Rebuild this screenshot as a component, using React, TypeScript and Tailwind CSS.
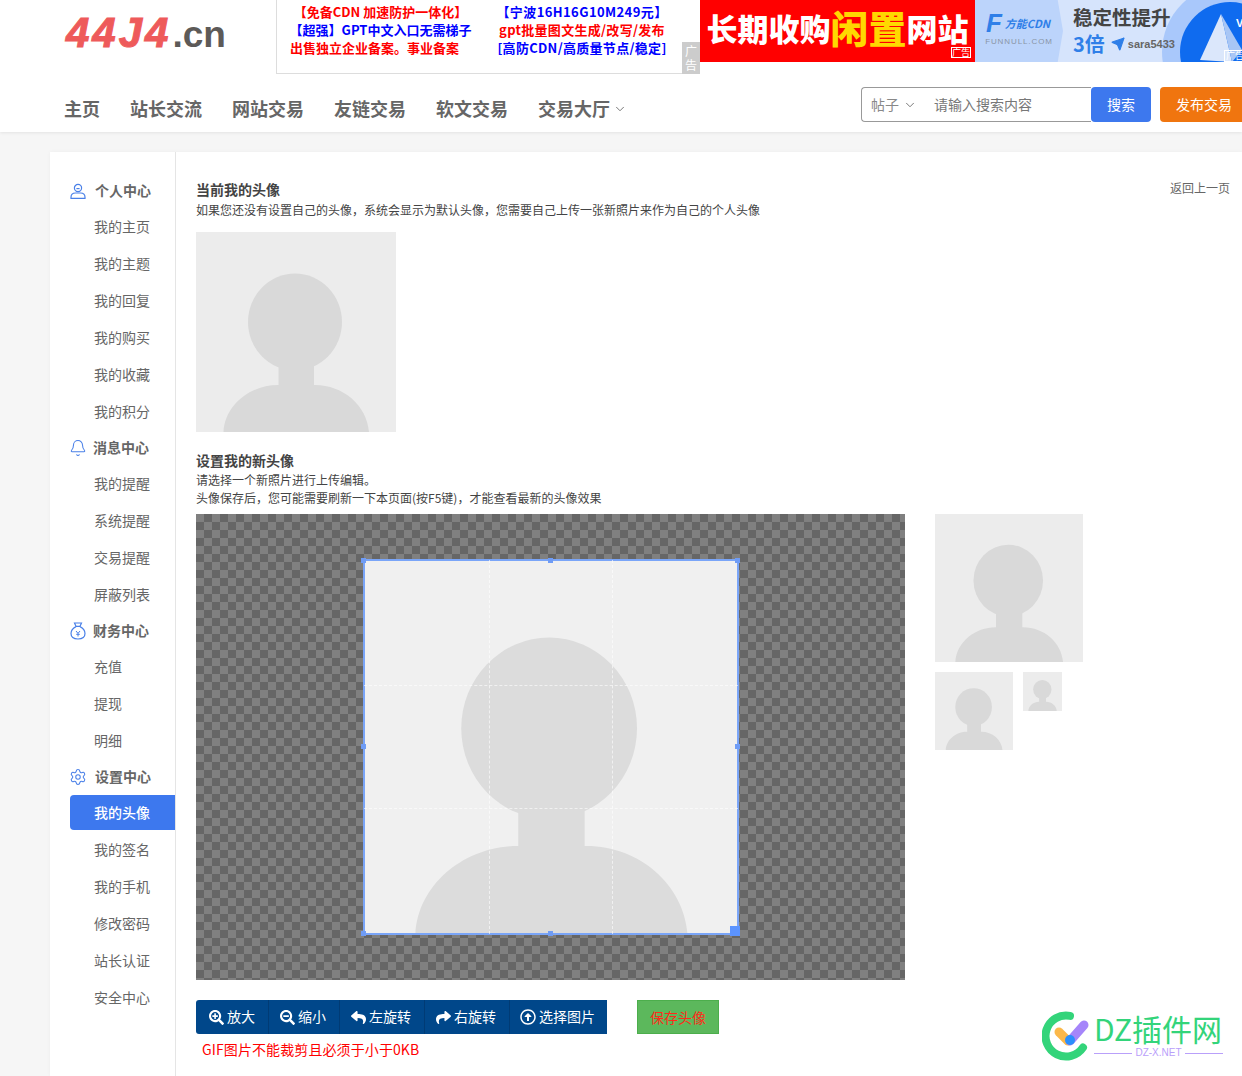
import { Bell, ChevronDown, Settings, Send } from "lucide-react";
import { FaSearchPlus, FaSearchMinus, FaReply, FaShare, FaRegArrowAltCircleUp } from "react-icons/fa";
import type { ReactNode } from "react";

const CN = "font-['Noto_Sans_CJK_SC','Noto_Sans',sans-serif]";

function UserIcon() {
  return (
    <svg width="16" height="16" viewBox="0 0 16 16" fill="none" stroke="#4a80e8" strokeWidth="1.2" className="shrink-0">
      <circle cx="8" cy="5" r="3.6" />
      <path d="M1 15.400v-1.200c0-2.600 2-4.200 4.400-4.200h5.200c2.400 0 4.400 1.600 4.400 4.200v1.200z" />
      <path d="M6.400 5.600h3.200" />
    </svg>
  );
}
function BagIcon() {
  return (
    <svg width="16" height="18" viewBox="0 0 16 18" fill="none" stroke="#4a80e8" strokeWidth="1.2" className="shrink-0">
      <path d="M4.500 1h7l-1.600 3.400H6.100z" />
      <path d="M6 4.600C3 6 1 8.600 1 11.600 1 15 3.500 17 8 17s7-2 7-5.400c0-3-2-5.600-5-7" />
      <path d="M6 9l2 2.400L10 9M8 11.400V14.500M6.200 12.300h3.600" strokeWidth="1" />
    </svg>
  );
}

function AvatarArt({ bg, fg, size, className = "" }: { bg: string; fg: string; size: number; className?: string }) {
  return (
    <svg width={size} height={size} viewBox="0 0 200 200" className={`block shrink-0 ${className}`}>
      <rect width="200" height="200" fill={bg} />
      <ellipse cx="99" cy="90" rx="47" ry="48.500" fill={fg} />
      <rect x="82.500" y="132" width="35.500" height="36" fill={fg} />
      <path d="M27.500 200C29 172 56 152 84 153h33c29 -1 54 20 56 47z" fill={fg} />
    </svg>
  );
}

const groups: { title: string; icon: ReactNode; textClass: string; items: string[] }[] = [
  { title: "个人中心", icon: <UserIcon />, textClass: "ml-[9px]", items: ["我的主页", "我的主题", "我的回复", "我的购买", "我的收藏", "我的积分"] },
  { title: "消息中心", icon: <Bell size={18} color="#4a80e8" strokeWidth={1.4} className="shrink-0" />, textClass: "ml-[7px]", items: ["我的提醒", "系统提醒", "交易提醒", "屏蔽列表"] },
  { title: "财务中心", icon: <BagIcon />, textClass: "ml-[7px]", items: ["充值", "提现", "明细"] },
  { title: "设置中心", icon: <Settings size={18} color="#4a80e8" strokeWidth={1.4} className="shrink-0" />, textClass: "ml-[9px]", items: ["我的头像", "我的签名", "我的手机", "修改密码", "站长认证", "安全中心"] },
];

const tools: { label: string; icon: ReactNode; w: string }[] = [
  { label: "放大", icon: <FaSearchPlus size={15} />, w: "w-[72px] pl-[12px]" },
  { label: "缩小", icon: <FaSearchMinus size={15} />, w: "w-[71px] pl-[10px]" },
  { label: "左旋转", icon: <FaReply size={15} />, w: "w-[85px] pl-[10px]" },
  { label: "右旋转", icon: <FaShare size={15} />, w: "w-[85px] pl-[10px]" },
  { label: "选择图片", icon: <FaRegArrowAltCircleUp size={16} />, w: "w-[98px] pl-[10px]" },
];

const nav = ["主页", "站长交流", "网站交易", "友链交易", "软文交易"];

const handles = [
  "left-[-3px] top-[-2px]",
  "left-[184px] top-[-2px]",
  "left-[371px] top-[-2px]",
  "left-[-3px] top-[184px]",
  "left-[371px] top-[184px]",
  "left-[-3px] top-[371px]",
  "left-[184px] top-[371px]",
];

export default function App() {
  return (
    <div className={`relative h-[1076px] w-[1242px] overflow-hidden bg-[#f6f6f6] ${CN}`}>
      {/* header */}
      <header className="h-[132px] bg-white shadow-[0_1px_3px_rgba(0,0,0,0.08)]">
        <div className="flex h-[74px]">
          <div className="flex w-[276px] items-baseline pl-[66px] pt-[7px]">
            <span className="font-['Liberation_Sans',sans-serif] text-[42px] font-bold italic leading-[52px] tracking-[3px] text-[#ee5a5a] [-webkit-text-stroke:1px_#ee5a5a]">44J4</span>
            <span className="ml-[1px] font-['Liberation_Sans',sans-serif] text-[37px] font-bold leading-[52px] text-[#5d5a58]">.cn</span>
          </div>
          <div className="relative h-[74px] w-[424px] border-b border-l border-[#dddddd] pt-[3px] text-[13px] font-bold leading-[18px]">
            <div className="grid grid-cols-[207px_196px] whitespace-nowrap text-center">
              <span className="text-[#ff0000]">【免备CDN 加速防护一体化】</span>
              <span className="tracking-[0.4px] text-[#0000ff]">【宁波16H16G10M249元】</span>
              <span className="text-[#0000ff]">【超强】GPT中文入口无需梯子</span>
              <span className="tracking-[0.3px] text-[#ff0000]">gpt批量图文生成/改写/发布</span>
              <span className="pr-[12px] text-[#ff0000]">出售独立企业备案。事业备案</span>
              <span className="tracking-[0.3px] text-[#0000ff]">[高防CDN/高质量节点/稳定]</span>
            </div>
            <span className="absolute right-0 top-[42px] flex h-[32px] w-[18px] items-center justify-center bg-[#cccccc] text-center text-[12px] font-normal leading-[14px] text-white">广<br />告</span>
          </div>
          <div className="relative flex h-[62px] w-[275px] items-center justify-center bg-[#ff0000] pb-[8px] font-black text-white">
            <span className="text-[31px] leading-none">长期收购</span>
            <span className="text-[38px] leading-none text-[#ffd800]">闲置</span>
            <span className="text-[31px] leading-none">网站</span>
            <span className="absolute bottom-[4px] right-[4px] border border-white text-[9px] font-normal leading-[9px]">广告</span>
          </div>
          <div className="relative flex h-[62px] flex-1 overflow-hidden bg-[#d6e4fc]">
            <svg width="82" height="62" viewBox="0 0 82 62" className="absolute left-[185px] top-0">
              <circle cx="70" cy="52" r="68" fill="#a9c8fb" />
              <circle cx="70" cy="52" r="50" fill="#0f6bef" />
              <path d="M61 14 L40 60 L72 62z" fill="#dbe7fb" />
              <path d="M61 14 L72 62 L82 50z" fill="#a8c6f5" />
              <text x="76" y="27" fontSize="11" fontWeight="700" fill="#ffffff" fontFamily="Liberation Sans">V5</text>
            </svg>
            <div className="relative flex w-[88px] flex-col items-center bg-[#bcd4fb] pt-[11px] [clip-path:polygon(0_0,94%_0,100%_50%,94%_100%,0_100%)]">
              <div className="flex items-center pr-[2px] text-[#2f7fe8]">
                <span className="font-['Liberation_Sans',sans-serif] text-[26px] font-bold italic leading-[24px]">F</span>
                <span className="ml-[3px] whitespace-nowrap text-[11px] font-bold italic leading-[14px]">方能CDN</span>
              </div>
              <span className="mt-[1px] whitespace-nowrap font-['Liberation_Sans',sans-serif] text-[8px] leading-[12px] tracking-[0.9px] text-[#8a94a6]">FUNNULL.COM</span>
            </div>
            <div className="relative ml-[10px] flex flex-col pt-[3px]">
              <span className="whitespace-nowrap text-[19.5px] font-bold leading-[28px] text-[#444444]">稳定性提升</span>
              <div className="flex items-center whitespace-nowrap">
                <span className="text-[20px] font-bold leading-[26px] text-[#2f7fe8]">3倍</span>
                <Send size={14} className="ml-[6px] fill-[#2f7fe8] text-[#2f7fe8]" />
                <span className="ml-[3px] font-['Liberation_Sans',sans-serif] text-[11px] font-bold text-[#666666]">sara5433</span>
              </div>
            </div>
            <span className="absolute left-[249px] top-[50px] whitespace-nowrap border border-white px-[1px] text-[9px] leading-[10px] text-white">广告</span>
          </div>
        </div>
        <div className="flex h-[58px] items-center justify-between">
          <nav className="flex items-center gap-[30px] pl-[64px] pt-[10px]">
            {nav.map((n) => (
              <span key={n} className="text-[18px] font-bold leading-[26px] text-[#666666]">{n}</span>
            ))}
            <span className="flex items-center text-[18px] font-bold leading-[26px] text-[#666666]">
              交易大厅
              <ChevronDown size={14} className="ml-[3px] mt-[2px] text-[#666666]" strokeWidth={1.5} />
            </span>
          </nav>
          <div className="flex w-[387px] shrink-0 items-center self-start pl-[6px] pt-[13px] text-[14px]">
            <div className="flex h-[35px] w-[230px] shrink-0 items-center rounded-l-[4px] border border-r-0 border-[#999999] pl-[9px] text-[#888888]">
              <span>帖子</span>
              <ChevronDown size={14} className="ml-[4px] text-[#666666]" strokeWidth={1.5} />
              <span className="ml-[17px] text-[#777777]">请输入搜索内容</span>
            </div>
            <div className="flex h-[35px] w-[60px] shrink-0 items-center justify-center rounded-[4px] bg-[#3d78ee] text-white">搜索</div>
            <div className="ml-[9px] flex h-[35px] w-[88px] shrink-0 items-center justify-center rounded-[4px] bg-[#f0750f] text-white">发布交易</div>
          </div>
        </div>
      </header>

      {/* card */}
      <div className="ml-[50px] mt-[20px] flex h-[924px] bg-white shadow-[0_0_4px_rgba(0,0,0,0.04)]">
        <aside className="w-[126px] shrink-0 border-r border-[#e5e5e5] pl-[20px] pt-[22px] text-[14px] text-[#666666]">
          {groups.map((g) => (
            <div key={g.title}>
              <div className="flex h-[35px] items-center pb-[2px] font-bold">
                <span className="flex w-[16px] justify-center">{g.icon}</span>
                <span className={g.textClass}>{g.title}</span>
              </div>
              {g.items.map((it) => (
                <div
                  key={it}
                  className={`mb-[2px] flex h-[35px] items-center pl-[24px] ${it === "我的头像" ? "rounded-l-[4px] bg-[#3d78ee] font-medium text-white" : ""}`}
                >
                  {it}
                </div>
              ))}
            </div>
          ))}
        </aside>

        <main className="min-w-0 flex-1 pl-[20px] pr-[12px] pt-[28px]">
          <div className="flex items-start justify-between">
            <h2 className="h-[20px] text-[14px] font-bold leading-[18px] text-[#444444]">当前我的头像</h2>
            <a className="mt-[-2px] text-[12px] leading-[20px] text-[#666666]">返回上一页</a>
          </div>
          <p className="text-[12px] leading-[20px] text-[#444444]">如果您还没有设置自己的头像，系统会显示为默认头像，您需要自己上传一张新照片来作为自己的个人头像</p>
          <AvatarArt bg="#ececec" fg="#d9d9d9" size={200} className="mt-[12px]" />

          <h2 className="mt-[19px] h-[20px] text-[14px] font-bold leading-[18px] text-[#444444]">设置我的新头像</h2>
          <p className="text-[12px] leading-[18px] text-[#444444]">请选择一个新照片进行上传编辑。</p>
          <p className="text-[12px] leading-[18px] text-[#444444]">头像保存后，您可能需要刷新一下本页面(按F5键)，才能查看最新的头像效果</p>

          <div className="mt-[7px] flex items-start gap-[30px]">
            <div className="relative h-[466px] w-[709px] shrink-0 bg-[image:conic-gradient(#666666_25%,#808080_0_50%,#666666_0_75%,#808080_0)] bg-[length:16px_16px]">
              <div className="absolute left-[168px] top-[46px] h-[374px] w-[374px] outline-2 outline-offset-[-1px] outline-[#7aa5f8]">
                <AvatarArt bg="#f0f0f0" fg="#dcdcdc" size={374} />
                <div className="absolute inset-y-0 left-[125px] w-[124px] border-x border-dashed border-white/60" />
                <div className="absolute inset-x-0 top-[125px] h-[124px] border-y border-dashed border-white/60" />
                {handles.map((h) => (
                  <span key={h} className={`absolute h-[5px] w-[5px] bg-[#6f9cf5] ${h}`} />
                ))}
                <span className="absolute left-[366px] top-[366px] h-[10px] w-[10px] bg-[#5c94ff]" />
              </div>
            </div>
            <div>
              <AvatarArt bg="#ececec" fg="#d9d9d9" size={148} />
              <div className="mt-[10px] flex items-start gap-[10px]">
                <AvatarArt bg="#ececec" fg="#d9d9d9" size={78} />
                <AvatarArt bg="#ececec" fg="#d9d9d9" size={39} />
              </div>
            </div>
          </div>

          <div className="mt-[20px] flex items-start">
            <div className="flex h-[34px] w-[411px] overflow-hidden rounded-l-[3px] bg-[#00478a] text-[14px] text-white">
              {tools.map((t, i) => (
                <div key={t.label} className={`flex h-[34px] items-center ${t.w} ${i > 0 ? "border-l border-[#003b75]" : ""}`}>
                  <span className="flex w-[16px] justify-center">{t.icon}</span>
                  <span className="ml-[3px] pb-[2px]">{t.label}</span>
                </div>
              ))}
            </div>
            <div className="ml-[30px] flex h-[34px] w-[82px] items-center justify-center border border-[#4cae4c] bg-[#5cb85c] text-[14px] text-[#ff2a1a]">保存头像</div>
          </div>
          <p className="ml-[6px] mt-[5px] text-[14px] leading-[20px] tracking-[0.1px] text-[#ff0000]">GIF图片不能裁剪且必须于小于0KB</p>
        </main>
      </div>

      {/* watermark */}
      <div className="absolute left-[1042px] top-[1008px] flex items-start">
        <svg width="52" height="56" viewBox="0 0 52 56" fill="none">
          <path d="M28 7.900A20.500 20.500 0 1 0 41 39.500" stroke="#33d47a" strokeWidth="8" strokeLinecap="round" />
          <path d="M17 24l9 9" stroke="#fbb84a" strokeWidth="9" strokeLinecap="round" />
          <path d="M28 33L42 17" stroke="#a585fa" strokeWidth="9" strokeLinecap="round" />
          <circle cx="28" cy="32" r="5" fill="#2b8ffb" />
        </svg>
        <div className="flex w-[129px] flex-col">
          <span className="whitespace-nowrap text-[30px] leading-[40px] text-[#33d47a]">DZ插件网</span>
          <div className="flex items-center gap-[3px] text-[10px] leading-[10px] text-[#b9a0fa]">
            <span className="h-px flex-1 bg-[#b9a0fa]" />
            <span className="font-['Liberation_Sans',sans-serif]">DZ-X.NET</span>
            <span className="h-px flex-1 bg-[#b9a0fa]" />
          </div>
        </div>
      </div>
    </div>
  );
}
